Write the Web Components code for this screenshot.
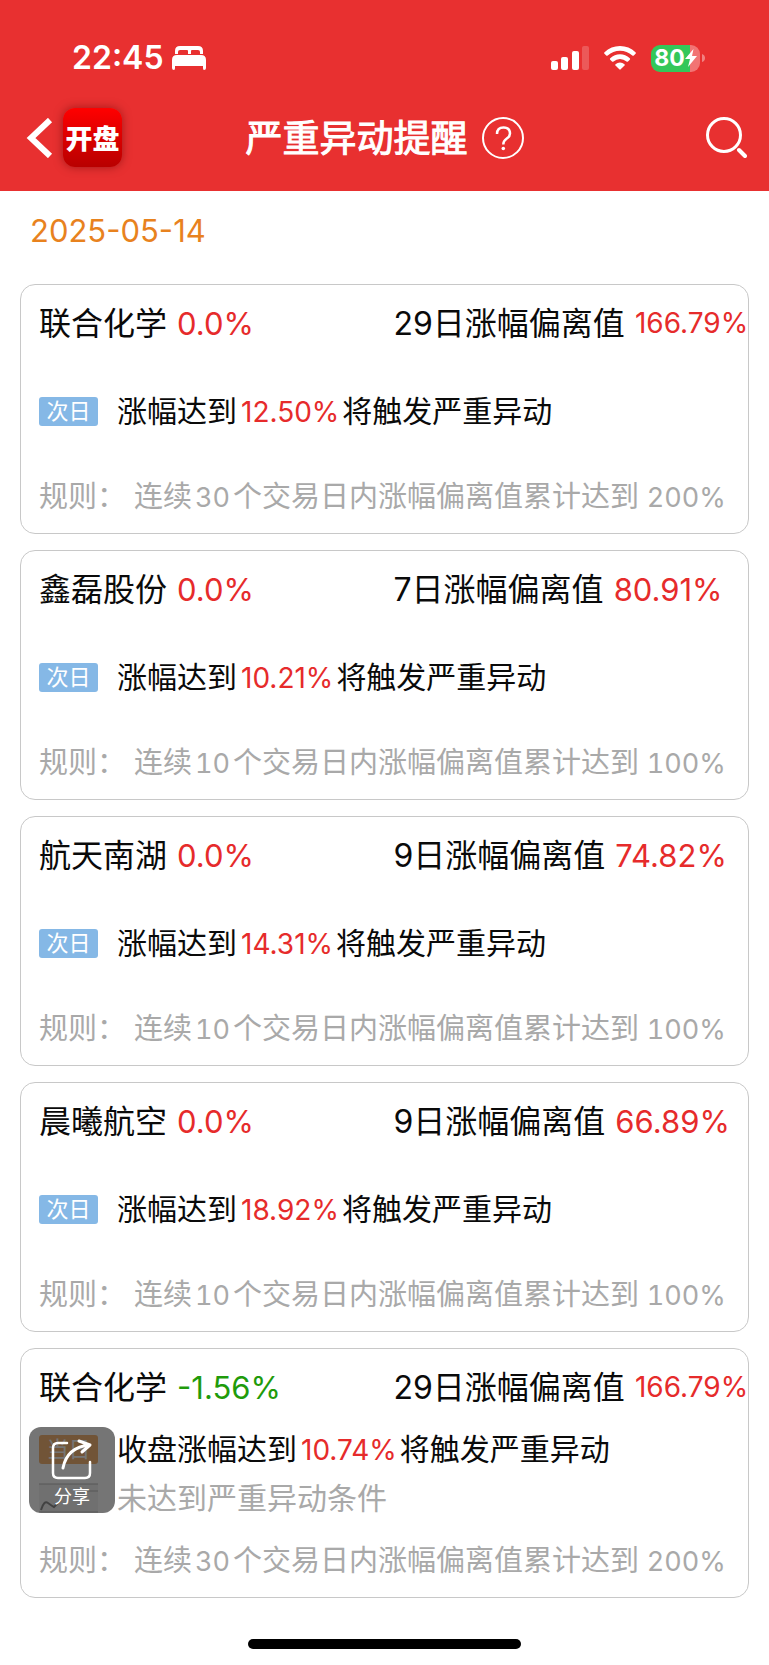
<!DOCTYPE html>
<html lang="zh-CN">
<head>
<meta charset="UTF-8">
<meta name="viewport" content="width=device-width, initial-scale=1">
<title>严重异动提醒</title>
<style>
  :root {
    --brand: #e83030;
    --up: #e62b2b;
    --down: #1f9b0b;
    --muted: #a9a9a9;
    --line: #c8c8c8;
  }
  body {
    margin: 0;
    background: #fff;
    color: #0a0a0a;
    font-family: Inter, "Noto Sans CJK SC", sans-serif;
    font-size: 29px;
  }
</style>
</head>
<body>
<alert-page>
  <status-bar slot="header" time="22:45" battery="80"></status-bar>
  <nav-bar slot="header" app="开盘">严重异动提醒</nav-bar>
  <alert-date>2025-05-14</alert-date>
  <alert-card name="联合化学" change="0.0%" days="29" value="166.79%" trigger="12.50%" period="30" limit="200%"></alert-card>
  <alert-card name="鑫磊股份" change="0.0%" days="7" value="80.91%" trigger="10.21%" period="10" limit="100%"></alert-card>
  <alert-card name="航天南湖" change="0.0%" days="9" value="74.82%" trigger="14.31%" period="10" limit="100%"></alert-card>
  <alert-card name="晨曦航空" change="0.0%" days="9" value="66.89%" trigger="18.92%" period="10" limit="100%"></alert-card>
  <alert-card name="联合化学" change="-1.56%" days="29" value="166.79%" trigger="10.74%" period="30" limit="200%" result="未达到严重异动条件"></alert-card>
  <share-button slot="float">分享</share-button>
</alert-page>

<script>
class AlertPage extends HTMLElement {
  connectedCallback() {
    this.attachShadow({ mode: 'open' });
    this.shadowRoot.innerHTML = `
      <style>
        :host {
          display: block;
          position: relative;
        }

        header {
          background: var(--brand);
          color: white;
        }

        main {
          display: flex;
          flex-direction: column;
          gap: 16px;
          padding: 0 20px;
        }

        footer {
          display: flex;
          justify-content: center;
          padding: 41px 0 16px;
        }

        .indicator {
          width: 273px;
          height: 10px;
          border-radius: 5px;
          background: black;
        }
      </style>
      <header><slot name="header"></slot></header>
      <main><slot></slot></main>
      <footer><div class="indicator"></div></footer>
      <slot name="float"></slot>
    `;
  }
}
customElements.define('alert-page', AlertPage);

class StatusBar extends HTMLElement {
  connectedCallback() {
    this.attachShadow({ mode: 'open' });
    this.shadowRoot.innerHTML = `
      <style>
        :host {
          display: flex;
          align-items: center;
          justify-content: space-between;
          height: 64px;
          padding: 26px 64px 0 72px;
        }

        div {
          display: flex;
          align-items: center;
        }

        .time {
          font-size: 32px;
          font-weight: 600;
          line-height: 40px;
          gap: 8px;
        }

        .system {
          gap: 15px;
        }

        .battery {
          gap: 2px;
        }

        .level {
          justify-content: center;
          width: 49px;
          height: 27px;
          border-radius: 9px;
          background: linear-gradient(90deg, #34c759 80%, #f27474 80%);
          font-size: 23px;
          font-weight: 700;
        }

        svg {
          display: block;
          fill: white;
        }
      </style>
      <div class="time">
        <span>${this.getAttribute('time')}</span>
        <svg width="34" height="24" viewBox="0 0 34 24">
          <path d="M3 8V5Q3 0 8 0H26Q31 0 31 5V8H28V6Q28 4 26 4H20Q19 4 19 5V8H16V5Q16 4 15 4H8Q6 4 6 6V8Z"/>
          <path d="M0 22V14Q0 9 5 9H29Q34 9 34 14V22Q34 24 32 24Q31 24 31 22V20H3V22Q3 24 2 24Q0 24 0 22Z"/>
        </svg>
      </div>
      <div class="system">
        <svg width="38" height="24" viewBox="0 0 38 24">
          <rect x="0" y="15" width="7" height="9" rx="2"/>
          <rect x="10" y="11" width="7" height="13" rx="2"/>
          <rect x="21" y="5" width="7" height="19" rx="2"/>
          <rect x="31" y="0" width="7" height="24" rx="2" opacity=".2"/>
        </svg>
        <svg width="32" height="24" viewBox="0 0 32 24">
          <path d="M16 0Q25 0 31.500 6.200Q32.300 7 31.500 7.800L29.800 9.500Q29 10 28.300 9.500Q23 4.800 16 4.800T3.700 9.500Q3 10 2.200 9.500L.5 7.800Q-.3 7 .5 6.200Q7 0 16 0Z"/>
          <path d="M16 8.300Q21.500 8.300 25.800 12.200Q26.500 13 25.800 13.700L24 15.500Q23.300 16 22.500 15.500Q19.700 13 16 13T9.500 15.500Q8.700 16 8 15.500L6.200 13.700Q5.500 13 6.200 12.200Q10.500 8.300 16 8.300Z"/>
          <path d="M16 16.500Q18.500 16.500 20.500 18.200Q21 18.800 20.500 19.400L16.700 23.300Q16 24 15.300 23.300L11.500 19.400Q11 18.800 11.500 18.200Q13.500 16.500 16 16.500Z"/>
        </svg>
        <div class="battery">
          <div class="level">
            <span>${this.getAttribute('battery')}</span>
            <svg width="12" height="18" viewBox="0 0 12 18"><path d="M8.500 0L0 10H5L3 18L12 7H7Z"/></svg>
          </div>
          <svg width="3" height="8" viewBox="0 0 3 8"><path d="M0 0Q3 1 3 4T0 8Z" opacity=".4"/></svg>
        </div>
      </div>
    `;
  }
}
customElements.define('status-bar', StatusBar);

class NavBar extends HTMLElement {
  connectedCallback() {
    this.attachShadow({ mode: 'open' });
    this.shadowRoot.innerHTML = `
      <style>
        :host {
          display: grid;
          grid-template-columns: 1fr auto 1fr;
          align-items: center;
          height: 95px;
          padding: 0 22px 6px;
          font-family: "Noto Sans CJK SC", sans-serif;
        }

        button {
          display: block;
          padding: 0;
          border: 0;
          background: none;
          color: inherit;
          font: inherit;
        }

        svg {
          display: block;
          fill: none;
          stroke: white;
        }

        .left, .center {
          display: flex;
          align-items: center;
        }

        .left {
          gap: 10px;
          padding-left: 4px;
        }

        .center {
          gap: 14px;
        }

        .app {
          width: 59px;
          height: 59px;
          border-radius: 12px;
          background: linear-gradient(#f00, #b80000);
          box-shadow: 0 0 10px rgba(90, 0, 0, 0.5);
          font-size: 27px;
          font-weight: 900;
          line-height: 59px;
          text-align: center;
          white-space: nowrap;
        }

        h1 {
          margin: 0;
          padding-bottom: 4px;
          font-size: 37px;
          font-weight: 400;
          line-height: 56px;
          -webkit-text-stroke: 1px white;
        }

        .search {
          justify-self: end;
        }
      </style>
      <div class="left">
        <button aria-label="返回">
          <svg width="27" height="40" viewBox="0 0 27 40" stroke-width="6"><path d="M24 2L5 20L24 38"/></svg>
        </button>
        <button class="app">${this.getAttribute('app')}</button>
      </div>
      <div class="center">
        <h1><slot></slot></h1>
        <button aria-label="帮助">
          <svg width="42" height="42" viewBox="0 0 42 42" stroke-width="2">
            <circle cx="21" cy="21" r="20"/>
            <path d="M15 17Q15 10.500 21.500 10.500Q28 10.500 28 16.500Q28 19.500 24.500 21.800Q21.300 24 21.300 27.500" stroke-width="2.500"/>
            <circle cx="21.300" cy="31.500" r="1.800" fill="white" stroke="none"/>
          </svg>
        </button>
      </div>
      <button class="search" aria-label="搜索">
        <svg width="42" height="42" viewBox="0 0 42 42" stroke-width="3">
          <circle cx="19" cy="18" r="16.500"/>
          <path d="M34 33L40 39" stroke-width="4" stroke-linecap="round"/>
        </svg>
      </button>
    `;
  }
}
customElements.define('nav-bar', NavBar);

class AlertDate extends HTMLElement {
  connectedCallback() {
    this.attachShadow({ mode: 'open' });
    this.shadowRoot.innerHTML = `
      <style>
        :host {
          display: block;
          padding: 2px 10px 0;
          color: #e8821e;
          font-size: 31px;
          line-height: 75px;
        }
      </style>
      <slot></slot>
    `;
  }
}
customElements.define('alert-date', AlertDate);

class AlertCard extends HTMLElement {
  connectedCallback() {
    const get = (name) => this.getAttribute(name);
    const result = get('result');
    const change = get('change');
    const value = get('value');

    this.attachShadow({ mode: 'open' });
    this.shadowRoot.innerHTML = `
      <style>
        :host {
          display: block;
          padding: 0 18px;
          border: 1px solid var(--line);
          border-radius: 15px;
          white-space: nowrap;
        }

        .head {
          display: grid;
          grid-template-columns: minmax(0, 1fr) minmax(0, 1fr);
          font-size: 32px;
          line-height: 77px;
        }

        .head div {
          display: flex;
          gap: 10px;
        }

        .head .deviation {
          padding-left: 9px;
        }

        .head .up, .head .down {
          font-size: 31px;
        }

        .head .long {
          font-size: 28px;
        }

        .up {
          color: var(--up);
        }

        .down {
          color: var(--down);
        }

        .body {
          display: flex;
          flex-direction: column;
          height: 98px;
          font-size: 30px;
          line-height: 30px;
        }

        .row {
          flex: 1;
          display: flex;
          align-items: center;
          gap: 19px;
        }

        .row + .row {
          flex: 0 0 52px;
        }

        .row .up {
          margin: 0 3px 0 4px;
          font-size: 28px;
        }

        .badge {
          width: 59px;
          height: 29px;
          border-radius: 3px;
          background: #85b8e6;
          color: white;
          font-size: 22px;
          line-height: 29px;
          text-align: center;
        }

        .today {
          background: #f09030;
        }

        .chart {
          display: block;
          fill: #eee;
          stroke: #999;
        }

        .muted, .rule {
          color: var(--muted);
        }

        .rule {
          display: flex;
          align-items: center;
          gap: 8px;
          height: 73px;
          line-height: 44px;
          font-variant-numeric: tabular-nums;
        }

        .rule b {
          font-size: 27px;
          font-weight: 400;
          line-height: 30px;
        }

        .rule .period {
          margin: 0 3px;
        }
      </style>
      <div class="head">
        <div><span>${get('name')}</span><span class="${change.startsWith('-') ? 'down' : 'up'}">${change}</span></div>
        <div class="deviation"><span>${get('days')}日涨幅偏离值</span><span class="up ${value.length > 6 ? 'long' : ''}">${value}</span></div>
      </div>
      <div class="body">
        <div class="row">
          <span class="badge ${result ? 'today' : ''}">${result ? '当日' : '次日'}</span>
          <span>${result ? '收盘' : ''}涨幅达到<span class="up">${get('trigger')}</span>将触发严重异动</span>
        </div>
        ${result ? `
        <div class="row">
          <svg class="chart" width="59" height="30" viewBox="0 0 59 30">
            <path d="M0 1H59V29H0Z" stroke="none"/>
            <path d="M0 1H59M0 29H59M38 8H59" />
            <path d="M2 27Q5 17 9 20T15 24L22 17" fill="none" stroke="#555" stroke-width="2"/>
          </svg>
          <span class="muted">${result}</span>
        </div>` : ''}
      </div>
      <div class="rule"><span>规则：</span><span>连续<b class="period">${get('period')}</b>个交易日内涨幅偏离值累计达到 <b>${get('limit')}</b></span></div>
    `;
  }
}
customElements.define('alert-card', AlertCard);

class ShareButton extends HTMLElement {
  connectedCallback() {
    this.attachShadow({ mode: 'open' });
    this.shadowRoot.innerHTML = `
      <style>
        :host {
          display: block;
          position: absolute;
          left: 29px;
          bottom: 152px;
        }

        button {
          display: flex;
          flex-direction: column;
          align-items: center;
          gap: 4px;
          width: 86px;
          height: 86px;
          padding: 12px 0 0;
          border: 0;
          border-radius: 12px;
          background: rgba(58, 58, 58, 0.7);
          color: white;
          font: inherit;
          font-size: 18px;
          line-height: 24px;
        }

        svg {
          display: block;
          fill: none;
          stroke: white;
          stroke-width: 3;
          stroke-linecap: round;
          stroke-linejoin: round;
        }
      </style>
      <button>
        <svg width="42" height="42" viewBox="0 0 42 42">
          <path d="M16 4H7Q2 4 2 9V34Q2 39 7 39H34Q39 39 39 34V23" stroke-width="2.500"/>
          <path d="M12 29Q16 8 39 6M28 2L39 6L31 13"/>
        </svg>
        <span><slot></slot></span>
      </button>
    `;
  }
}
customElements.define('share-button', ShareButton);
</script>
</body>
</html>
